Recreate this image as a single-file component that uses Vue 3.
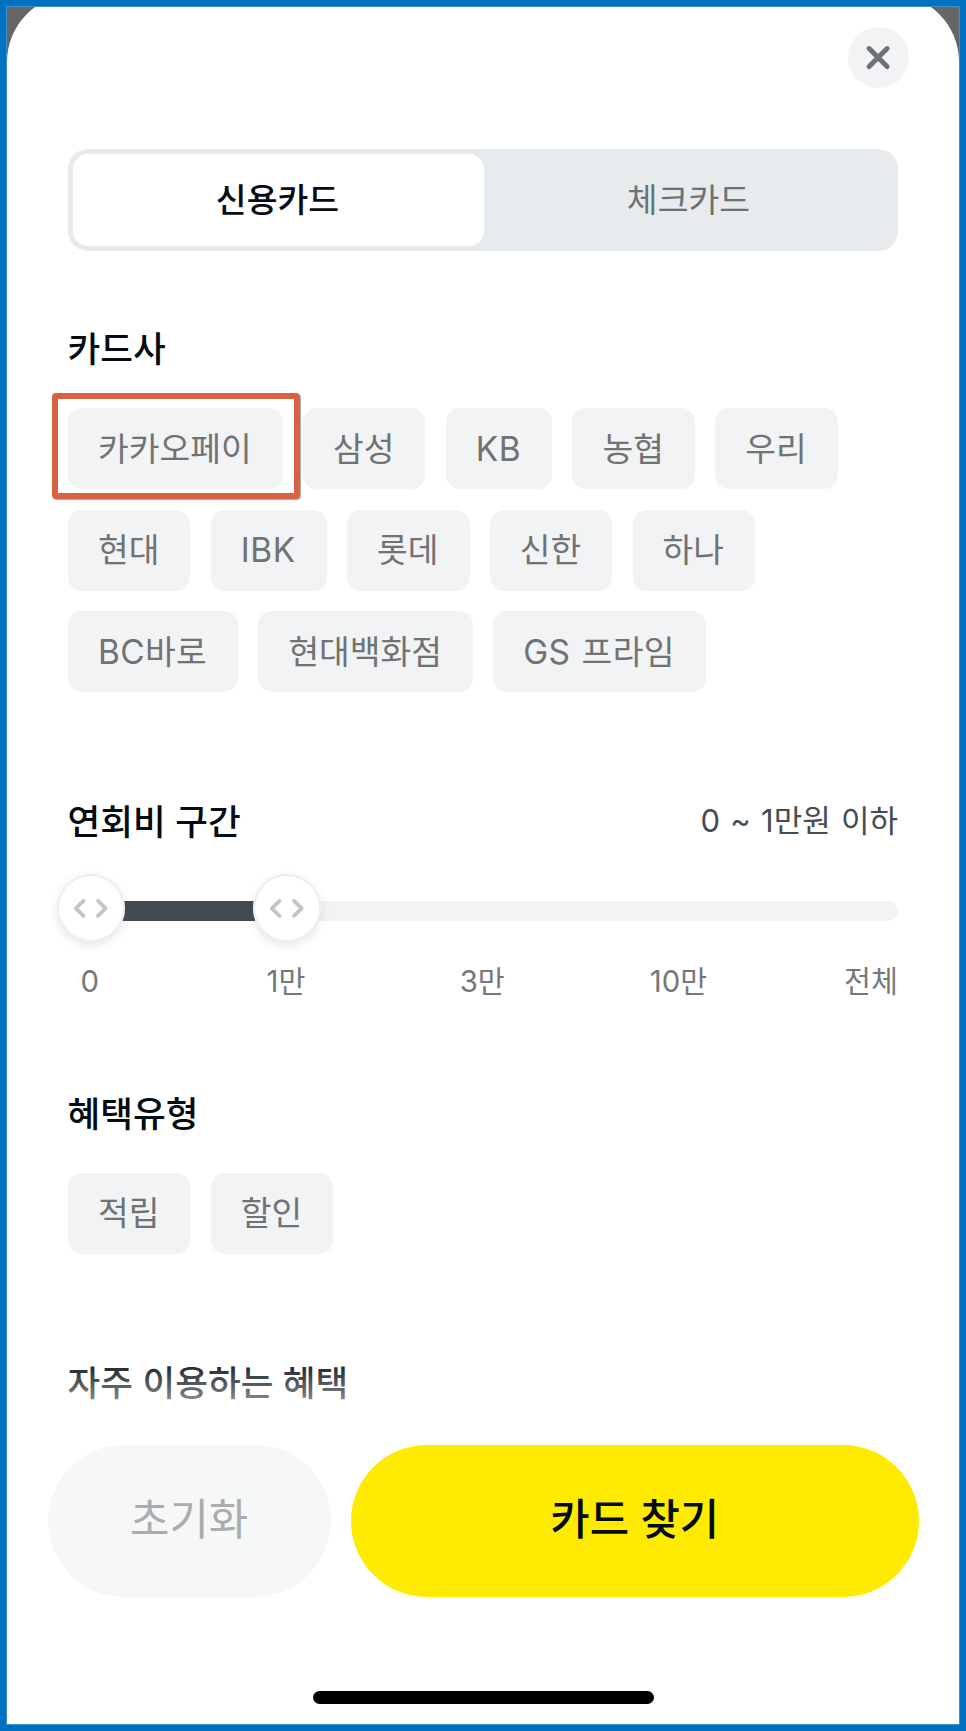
<script setup>
const issuerRows = [
  [
    { name: '카카오페이', marked: true },
    { name: '삼성' },
    { name: 'KB', kind: 'latin' },
    { name: '농협' },
    { name: '우리' },
  ],
  [
    { name: '현대' },
    { name: 'IBK', kind: 'latin' },
    { name: '롯데' },
    { name: '신한' },
    { name: '하나' },
  ],
  [{ name: 'BC바로', kind: 'mixed' }, { name: '현대백화점' }, { name: 'GS 프라임', kind: 'mixed' }],
]
const feeStops = ['0', '1만', '3만', '10만', '전체']
const benefitTypes = ['적립', '할인']
</script>

<template>
  <div class="frame">
    <main class="sheet">
      <header class="top">
        <button class="close" aria-label="닫기">
          <svg width="61" height="61" viewBox="0 0 61 61">
            <path d="M21.1 21.6 39.1 39.6M39.1 21.6 21.1 39.6" />
          </svg>
        </button>
      </header>

      <nav class="segment">
        <button class="seg active">신용카드</button>
        <button class="seg">체크카드</button>
      </nav>

      <section class="issuers">
        <h2>카드사</h2>
        <div class="rows">
          <div v-for="(row, i) in issuerRows" :key="i" class="row">
            <button v-for="c in row" :key="c.name" class="chip" :class="c.kind">
              {{ c.name }}
              <span v-if="c.marked" class="marker"></span>
            </button>
          </div>
        </div>
      </section>

      <section class="fee">
        <div class="fee-head">
          <h2>연회비 구간</h2>
          <span class="range">0 ~ 1만원 이하</span>
        </div>
        <div class="slider">
          <div class="track"><div class="fill"></div></div>
          <span v-for="n in 2" :key="n" class="knob" :class="'knob-' + n">
            <svg width="68" height="68" viewBox="0 0 68 68">
              <path d="M26.5 26.8 18.8 34.3 26.5 41.8M41 26.8 48.7 34.3 41 41.8" />
            </svg>
          </span>
        </div>
        <div class="stops">
          <span v-for="s in feeStops" :key="s">{{ s }}</span>
        </div>
      </section>

      <section class="types">
        <h2>혜택유형</h2>
        <div class="row">
          <button v-for="t in benefitTypes" :key="t" class="chip">{{ t }}</button>
        </div>
      </section>

      <section class="frequent">
        <h2>자주 이용하는 혜택</h2>
        <div class="fade"></div>
      </section>

      <footer class="actions">
        <button class="reset">초기화</button>
        <button class="find">카드 찾기</button>
      </footer>
      <div class="home"></div>
    </main>
  </div>
</template>

<style>
body {
  margin: 0;
}
</style>

<style scoped>
.frame {
  box-sizing: border-box;
  width: 966px;
  height: 1731px;
  border: 6px solid #0070c0;
  background: #666;
  overflow: hidden;
  position: relative;
  font-family: Inter, 'Noto Sans CJK KR', sans-serif;
  color: #050b12;
}
.frame::after {
  content: '';
  position: absolute;
  inset: 0;
  border: 1px solid #3a91d0;
  pointer-events: none;
}
.sheet {
  box-sizing: border-box;
  height: 1731px;
  margin: -12px 1px 0;
  padding: 12px 61px 0;
  border-radius: 68px 68px 0 0;
  background: #fff;
}
button {
  border: 0;
  margin: 0;
  padding: 0;
  background: none;
  font: inherit;
  line-height: 1.2;
  color: inherit;
  white-space: nowrap;
}
h2 {
  margin: 0;
  font-size: 35.6px;
  line-height: 45px;
  height: 44px;
  font-weight: 500;
  text-indent: -0.5px;
}
.top {
  display: flex;
  justify-content: flex-end;
  padding: 21px 0 0;
  margin-right: -10.5px;
  height: 122px;
}
.close {
  width: 61px;
  height: 61px;
  border-radius: 50%;
  background: #f2f3f5;
}
.close svg {
  display: block;
}
.close path {
  fill: none;
  stroke: #6c7175;
  stroke-width: 5;
  stroke-linecap: round;
}
.segment {
  box-sizing: border-box;
  display: flex;
  width: 830px;
  height: 101.5px;
  padding: 5px;
  border-radius: 20px;
  background: #e8ebee;
  font-size: 33.5px;
}
.seg {
  flex: 1;
  border-radius: 15px;
  color: #6c7175;
}
.seg.active {
  flex: 0 0 411px;
  padding-right: 2px;
  box-sizing: border-box;
  background: #fff;
  color: #050b12;
  font-weight: 500;
}
.issuers {
  padding-top: 76px;
}
.rows {
  display: flex;
  flex-direction: column;
  gap: 20.6px;
  margin-top: 37.7px;
}
.row {
  display: flex;
  gap: 20.3px;
}
.chip {
  position: relative;
  height: 81px;
  padding: 0 31px 0 30px;
  border-radius: 14px;
  background: #f2f3f5;
  color: #707274;
  font-size: 33.4px;
  word-spacing: 1.5px;
}
.chip.latin {
  letter-spacing: 0.6px;
}
.chip.mixed {
  letter-spacing: 0.35px;
}
.marker {
  position: absolute;
  left: -16.5px;
  top: -15.2px;
  width: 236px;
  height: 94px;
  border: 6.5px solid #d96243;
  border-radius: 4px;
  box-shadow: 1px 1px 1px rgba(0, 0, 0, 0.35);
}
.fee {
  padding-top: 107.2px;
}
.fee-head {
  display: flex;
  justify-content: space-between;
}
.range {
  font-size: 31px;
  line-height: 42px;
  color: #454c54;
  word-spacing: 1.5px;
}
.slider {
  position: relative;
  height: 68px;
  margin-top: 30.3px;
}
.track {
  position: absolute;
  left: 0;
  right: 0;
  top: 27.5px;
  height: 20px;
  border-radius: 10px;
  background: #f2f3f5;
}
.fill {
  width: 219px;
  height: 20px;
  border-radius: 10px;
  background: #434a52;
}
.knob {
  position: absolute;
  box-sizing: border-box;
  top: 0.5px;
  width: 68px;
  height: 68px;
  border-radius: 50%;
  background: #fff;
  box-shadow: inset 0 0 0 2px #eaeff4, 0 3px 8px rgba(40, 60, 80, 0.13);
}
.knob-1 {
  left: -11.5px;
}
.knob-2 {
  left: 184.5px;
}
.knob svg {
  display: block;
}
.knob path {
  fill: none;
  stroke: #c3c4c6;
  stroke-width: 3.8;
  stroke-linecap: round;
  stroke-linejoin: round;
}
.stops {
  display: grid;
  grid-template-columns: repeat(4, 196.3px) 1fr;
  margin-left: -76.5px;
  margin-top: 22px;
  font-size: 29.3px;
  line-height: 36px;
  color: #75787b;
  text-align: center;
}
.stops span:last-child {
  text-align: right;
}
.types {
  padding-top: 92.2px;
}
.types .row {
  margin-top: 36.6px;
}
.frequent {
  position: relative;
  padding-top: 107px;
}
.fade {
  position: absolute;
  left: -1px;
  right: 0;
  top: 102px;
  height: 87px;
  background: linear-gradient(rgba(255, 255, 255, 0), #fff);
}
.actions {
  position: relative;
  display: flex;
  gap: 20.3px;
  margin: 39.9px -20.5px 0;
  font-size: 42.8px;
}
.reset,
.find {
  height: 152px;
  padding-bottom: 1px;
  border-radius: 76px;
}
.reset {
  width: 283.3px;
  background: #f6f8f8;
  color: #aaacb0;
}
.find {
  flex: 1;
  background: #ffeb00;
  font-weight: 500;
}
.home {
  width: 341px;
  height: 13px;
  margin: 94px auto 0;
  border-radius: 7px;
  background: #000;
}
</style>
